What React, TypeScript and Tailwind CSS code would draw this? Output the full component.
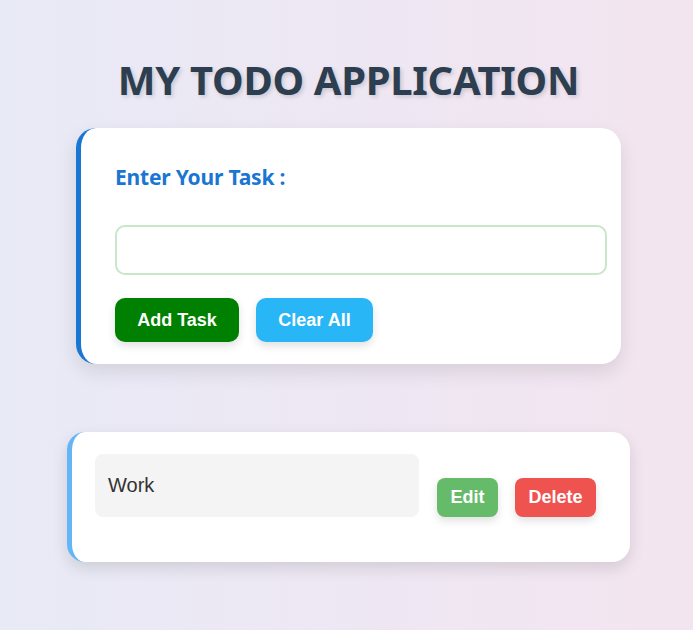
import { useState } from "react";

type Task = { id: number; text: string };

export default function App() {
  const [value, setValue] = useState("");
  const [tasks, setTasks] = useState<Task[]>([{ id: 1, text: "Work" }]);

  function addTask() {
    if (!value.trim()) return;
    setTasks((t) => [...t, { id: Date.now(), text: value.trim() }]);
    setValue("");
  }

  return (
    <div className="min-h-[630px] w-full bg-gradient-to-r from-[#e8eaf6] to-[#f3e5f0] pt-[52px] font-['Noto_Sans',sans-serif]">
      <h1 className="translate-x-[2px] text-center text-[40px] font-bold leading-[56px] tracking-[-0.3px] text-[#2c3e50] [text-shadow:2px_2px_4px_rgba(0,0,0,0.15)]">
        MY TODO APPLICATION
      </h1>

      <div className="mx-auto mt-[20px] w-[545px] translate-x-[2px] rounded-[20px] border-l-[5px] border-[#1976d2] bg-white pb-[22px] pl-[34px] pr-[14px] pt-[34px] shadow-[0_8px_20px_rgba(0,0,0,0.1)]">
        <label className="block text-[21px] font-bold leading-[30px] tracking-[-0.2px] text-[#1976d2]">
          Enter Your Task :
        </label>
        <input
          value={value}
          onChange={(e) => setValue(e.target.value)}
          className="mt-[33px] block h-[50px] w-full rounded-[10px] border-2 border-[#c8e6c9] px-3 text-[18px] outline-none"
        />
        <div className="mt-[23px] flex gap-[17px] font-['Liberation_Sans',Arial,sans-serif]">
          <button
            onClick={addTask}
            className="h-[44px] w-[124px] rounded-[10px] bg-[#008000] text-[18px] font-bold text-white shadow-[0_4px_8px_rgba(0,0,0,0.12)]"
          >
            Add Task
          </button>
          <button
            onClick={() => setTasks([])}
            className="h-[44px] w-[117px] rounded-[10px] bg-[#29b6f6] text-[18px] font-bold text-white shadow-[0_4px_8px_rgba(0,0,0,0.12)]"
          >
            Clear All
          </button>
        </div>
      </div>

      <div className="mt-[68px] flex flex-col items-center gap-4">
        {tasks.map((t) => (
          <div
            key={t.id}
            className="flex w-[563px] translate-x-[2px] items-end rounded-[18px] border-l-[5px] border-[#64b5f6] bg-white pb-[45px] pl-[23px] pt-[22px] font-['Liberation_Sans',Arial,sans-serif] shadow-[0_6px_16px_rgba(0,0,0,0.12)]"
          >
            <div className="flex h-[63px] w-[324px] items-center rounded-[8px] bg-[#f4f4f4] px-[13px] pb-[2px] text-[20px] text-[#333]">
              {t.text}
            </div>
            <button className="ml-[18px] h-[39px] w-[61px] rounded-[8px] bg-[#66bb6a] text-[18px] font-bold text-white shadow-[0_4px_8px_rgba(0,0,0,0.12)]">
              Edit
            </button>
            <button
              onClick={() => setTasks((x) => x.filter((y) => y.id !== t.id))}
              className="ml-[17px] h-[39px] w-[81px] rounded-[8px] bg-[#ef5350] text-[18px] font-bold text-white shadow-[0_4px_8px_rgba(0,0,0,0.12)]"
            >
              Delete
            </button>
          </div>
        ))}
      </div>
    </div>
  );
}
